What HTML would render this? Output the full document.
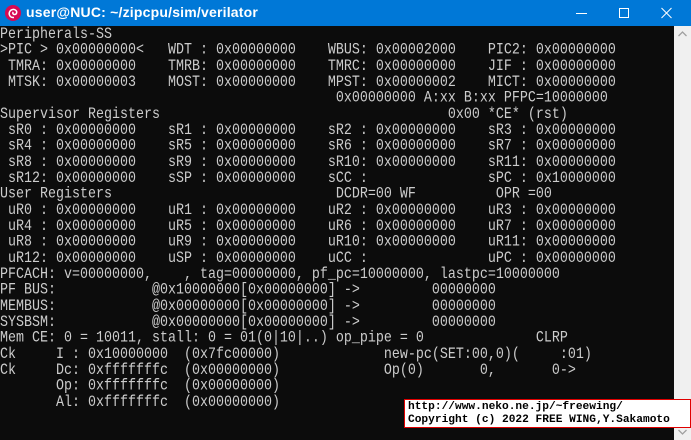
<!DOCTYPE html>
<html><head><meta charset="utf-8"><style>
*{margin:0;padding:0;box-sizing:border-box}
body{width:691px;height:440px;background:#0c0c0c;position:relative;overflow:hidden;font-family:"Liberation Sans",sans-serif}
#tb{position:absolute;left:0;top:0;width:691px;height:26px;background:#0078d7;color:#fff}
#tb .t{position:absolute;left:26px;top:4px;font-size:14px;font-weight:bold;letter-spacing:0.2px}
#term{position:absolute;left:0;top:27px;font-family:"Liberation Mono",monospace;font-size:13.33px;line-height:13.333px;color:#cccccc;white-space:pre;transform:scale(1,1.2);transform-origin:0 0}
#sb{position:absolute;left:674px;top:26px;width:17px;height:414px;background:#f0f0f0}
#cp{position:absolute;left:404px;top:399px;width:287px;height:29px;background:#fff;border:1px solid #e00000;font-family:"Liberation Mono",monospace;font-weight:bold;font-size:11.2px;line-height:13px;color:#000;padding:1px 0 0 3px;white-space:pre}
</style></head><body>
<div id="tb">
<svg style="position:absolute;left:5px;top:5px" width="16" height="16" viewBox="0 0 16 16"><circle cx="8" cy="8" r="8" fill="#d70a53"/><path d="M9 12.5 C5 13 3.5 9.5 4.5 7 C5.5 4.5 9 3.5 11 5.5 C12.5 7 11.5 9.5 9.5 9.5 C8 9.5 7.3 8 8.3 7" stroke="#fff" stroke-width="1.5" fill="none"/></svg>
<span class="t">user@NUC: ~/zipcpu/sim/verilator</span>
<svg style="position:absolute;left:575px;top:6px" width="14" height="14"><line x1="1" y1="7.5" x2="12" y2="7.5" stroke="#fff"/></svg>
<svg style="position:absolute;left:618px;top:6px" width="14" height="14"><rect x="1.5" y="2.5" width="9" height="9" stroke="#fff" fill="none"/></svg>
<svg style="position:absolute;left:660px;top:6px" width="14" height="14"><path d="M1.5 2 L11.5 12 M11.5 2 L1.5 12" stroke="#fff"/></svg>
</div>
<div id="term">Peripherals-SS
>PIC > 0x00000000<   WDT : 0x00000000    WBUS: 0x00002000    PIC2: 0x00000000
 TMRA: 0x00000000    TMRB: 0x00000000    TMRC: 0x00000000    JIF : 0x00000000
 MTSK: 0x00000003    MOST: 0x00000000    MPST: 0x00000002    MICT: 0x00000000
                                          0x00000000 A:xx B:xx PFPC=10000000
Supervisor Registers                                    0x00 *CE* (rst)
 sR0 : 0x00000000    sR1 : 0x00000000    sR2 : 0x00000000    sR3 : 0x00000000
 sR4 : 0x00000000    sR5 : 0x00000000    sR6 : 0x00000000    sR7 : 0x00000000
 sR8 : 0x00000000    sR9 : 0x00000000    sR10: 0x00000000    sR11: 0x00000000
 sR12: 0x00000000    sSP : 0x00000000    sCC :               sPC : 0x10000000
User Registers                            DCDR=00 WF          OPR =00
 uR0 : 0x00000000    uR1 : 0x00000000    uR2 : 0x00000000    uR3 : 0x00000000
 uR4 : 0x00000000    uR5 : 0x00000000    uR6 : 0x00000000    uR7 : 0x00000000
 uR8 : 0x00000000    uR9 : 0x00000000    uR10: 0x00000000    uR11: 0x00000000
 uR12: 0x00000000    uSP : 0x00000000    uCC :               uPC : 0x00000000
PFCACH: v=00000000,    , tag=00000000, pf_pc=10000000, lastpc=10000000
PF BUS:            @0x10000000[0x00000000] ->         00000000
MEMBUS:            @0x00000000[0x00000000] ->         00000000
SYSBSM:            @0x00000000[0x00000000] ->         00000000
Mem CE: 0 = 10011, stall: 0 = 01(0|10|..) op_pipe = 0              CLRP
Ck     I : 0x10000000  (0x7fc00000)             new-pc(SET:00,0)(     :01)
Ck     Dc: 0xfffffffc  (0x00000000)             Op(0)       0,       0->
       Op: 0xfffffffc  (0x00000000)
       Al: 0xfffffffc  (0x00000000)</div>
<div id="sb">
<svg style="position:absolute;left:4px;top:5px" width="9" height="6"><path d="M0.5 5 L4.5 1 L8.5 5" stroke="#a0a0a0" fill="none" stroke-width="1.3"/></svg>
<svg style="position:absolute;left:4px;top:403px" width="9" height="6"><path d="M0.5 1 L4.5 5 L8.5 1" stroke="#a0a0a0" fill="none" stroke-width="1.3"/></svg>
</div>
<div id="cp">http://www.neko.ne.jp/~freewing/
Copyright (c) 2022 FREE WING,Y.Sakamoto</div>
</body></html>
